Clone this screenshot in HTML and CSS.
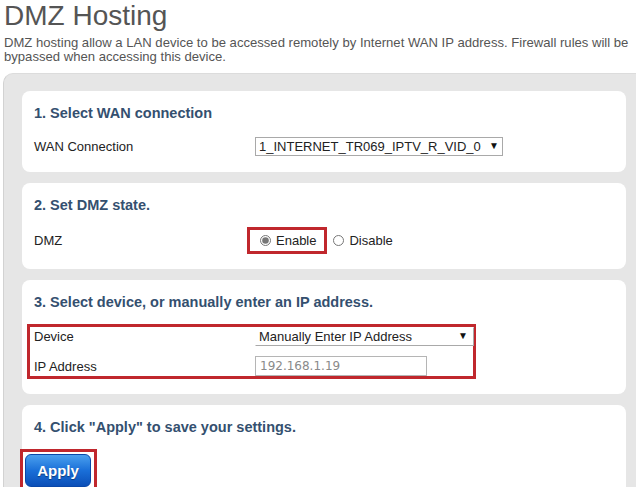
FILE: index.html
```html
<!DOCTYPE html>
<html lang="en">
<head>
    <meta charset="UTF-8">
    <meta name="viewport" content="width=device-width, initial-scale=1.0">
    <title>DMZ Hosting</title>
    <link rel="stylesheet" href="styles.css">
</head>
<body>

    <div class="page-head">
        <h1>DMZ Hosting</h1>
        <p class="intro">DMZ hosting allow a LAN device to be accessed remotely by Internet WAN IP address. Firewall rules will be bypassed when accessing this device.</p>
    </div>

    <div class="panel">

        <!-- Paso 1 -->
        <div class="card">
            <h2>1. Select WAN connection</h2>
            <div class="row">
                <span class="label">WAN Connection</span>
                <span class="select-box wan-select">
                    <select>
                        <option>1_INTERNET_TR069_IPTV_R_VID_0</option>
                    </select>
                </span>
            </div>
        </div>

        <!-- Paso 2 -->
        <div class="card">
            <h2>2. Set DMZ state.</h2>
            <div class="row">
                <span class="label">DMZ</span>
                <label class="radio mark">
                    <input type="radio" name="dmz" checked> Enable
                </label>
                <label class="radio">
                    <input type="radio" name="dmz"> Disable
                </label>
            </div>
        </div>

        <!-- Paso 3 -->
        <div class="card">
            <h2>3. Select device, or manually enter an IP address.</h2>
            <div class="mark mark-block">
                <div class="row row-device">
                    <span class="label">Device</span>
                    <span class="select-box device-select">
                        <select>
                            <option>Manually Enter IP Address</option>
                        </select>
                    </span>
                </div>
                <div class="row row-ip">
                    <span class="label">IP Address</span>
                    <input class="ip-input" type="text" placeholder="192.168.1.19">
                </div>
            </div>
        </div>

        <!-- Paso 4 -->
        <div class="card">
            <h2>4. Click "Apply" to save your settings.</h2>
            <div class="mark mark-apply">
                <button class="apply-btn">Apply</button>
            </div>
        </div>

    </div>

</body>
</html>
```

FILE: styles.css
```css
* {
    margin: 0;
    padding: 0;
    box-sizing: border-box;
}

body {
    font-family: "Liberation Sans", Arial, sans-serif;
    background-color: #fff;
    color: #333;
    overflow: hidden;
}

/* Cabecera */
.page-head {
    padding: 0 4px;
}

h1 {
    font-size: 28px;
    font-weight: normal;
    line-height: 32px;
    color: #555;
}

.intro {
    margin-top: 4px;
    font-size: 13.1px;
    line-height: 14px;
    color: #555;
}

/* Panel gris */
.panel {
    margin: 9px 0 0 3px;
    padding: 17px 10px 0 18px;
    background-color: #e6e6e6;
    border-left: 1px solid #d2d2d2;
    border-top: 1px solid #dcdcdc;
    border-top-left-radius: 10px;
    display: flex;
    flex-direction: column;
    gap: 11px;
}

.card {
    background-color: #fff;
    border-radius: 8px;
    padding: 12px 12px 15px;
}

h2 {
    font-size: 14.5px;
    line-height: 20px;
    font-weight: bold;
    color: #34506f;
    margin-bottom: 12px;
}

.row {
    display: flex;
    align-items: center;
    min-height: 22px;
    font-size: 13px;
    color: #222;
}

.label {
    width: 221px;
    flex-shrink: 0;
}

/* Selects */
.select-box {
    position: relative;
    display: inline-block;
}

.select-box select {
    appearance: none;
    -webkit-appearance: none;
    font-family: inherit;
    font-size: 13px;
    color: #222;
    background-color: #fff;
    border: 1px solid #a9a9a9;
    height: 19px;
    line-height: 17px;
    padding: 0 18px 0 3px;
    border-radius: 0;
}

.select-box::after {
    content: "\25BC";
    position: absolute;
    right: 4px;
    top: 3px;
    font-size: 10px;
    color: #111;
    pointer-events: none;
}

.wan-select select {
    width: 248px;
}

.device-select select {
    width: 219px;
    border-left-color: #fff;
    border-top-color: #fff;
}

.device-select::after {
    right: 6px;
}

/* Radios */
.radio {
    display: inline-flex;
    align-items: center;
    gap: 3px;
    font-size: 13px;
    color: #222;
}

.radio input {
    width: 11px;
    height: 11px;
    margin: 0 2px 0 0;
    accent-color: #777;
}

/* Recuadros rojos */
.mark {
    border: 3px solid #c0272d;
}

.radio.mark {
    margin-left: -8px;
    height: 27px;
    padding: 0 8px 0 10px;
    margin-right: 6px;
}

.mark-block {
    margin-left: -7px;
    width: 449px;
    padding-left: 4px;
}

.row-device {
    min-height: 19px;
    margin-bottom: 10px;
}

.row-ip {
    min-height: 20px;
}

.ip-input {
    width: 172px;
    height: 20px;
    border: 1px solid #b5b5b5;
    font-family: "DejaVu Sans", sans-serif;
    font-size: 12px;
    padding: 0 4px;
    color: #333;
}

.ip-input::placeholder {
    color: #8a8a8a;
}

/* Botón */
.mark-apply {
    display: inline-block;
    margin-left: -14px;
    padding: 2px 3px 0 2px;
}

.apply-btn {
    display: block;
    width: 66px;
    height: 33px;
    border: 1px solid #0a47a8;
    border-radius: 6px;
    background: linear-gradient(#4aa0ee, #1a6fd8 50%, #0b4fb8);
    color: #fff;
    font-family: inherit;
    font-size: 15px;
    font-weight: bold;
    text-shadow: 0 1px 1px rgba(0, 0, 0, 0.4);
    cursor: pointer;
}
```
